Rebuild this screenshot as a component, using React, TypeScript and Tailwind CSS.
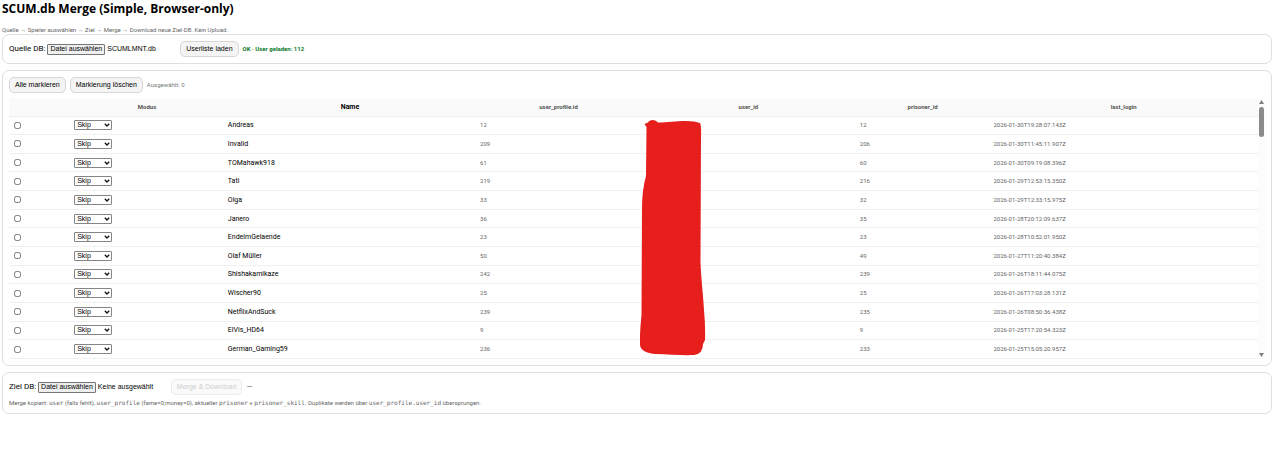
import { useRef, useState } from 'react'

type Mode = 'skip' | 'merge' | 'replace'

interface User {
  name: string
  profileId: number
  prisonerId: number
  lastLogin: string
}

const USERS: User[] = [
  { name: 'Andreas', profileId: 12, prisonerId: 12, lastLogin: '2026-01-30T19:28:07.143Z' },
  { name: 'Invalid', profileId: 209, prisonerId: 206, lastLogin: '2026-01-30T11:45:11.907Z' },
  { name: 'TOMahawk918', profileId: 61, prisonerId: 60, lastLogin: '2026-01-30T09:19:08.396Z' },
  { name: 'Tati', profileId: 219, prisonerId: 216, lastLogin: '2026-01-29T12:53:15.350Z' },
  { name: 'Olga', profileId: 33, prisonerId: 32, lastLogin: '2026-01-29T12:33:15.975Z' },
  { name: 'Janero', profileId: 36, prisonerId: 35, lastLogin: '2026-01-28T20:12:09.637Z' },
  { name: 'EndeimGelaende', profileId: 23, prisonerId: 23, lastLogin: '2026-01-28T10:52:01.950Z' },
  { name: 'Olaf Müller', profileId: 50, prisonerId: 49, lastLogin: '2026-01-27T11:20:40.384Z' },
  { name: 'Shishakamikaze', profileId: 242, prisonerId: 239, lastLogin: '2026-01-26T18:11:44.075Z' },
  { name: 'Wischer90', profileId: 25, prisonerId: 25, lastLogin: '2026-01-26T17:03:28.131Z' },
  { name: 'NetflixAndSuck', profileId: 239, prisonerId: 235, lastLogin: '2026-01-26T08:50:36.438Z' },
  { name: 'ElVis_HD64', profileId: 9, prisonerId: 9, lastLogin: '2026-01-25T17:20:54.323Z' },
  { name: 'German_Gaming59', profileId: 236, prisonerId: 233, lastLogin: '2026-01-25T15:05:20.957Z' },
]

const CARD = 'rounded-[7px] border border-[#dfdfdf] p-1.5'
const BUTTON =
  'h-4 rounded-[5px] border border-[#d6d6d6] bg-[#f4f4f4] px-[5px] font-["Liberation_Sans",Arial,sans-serif] text-[7px] leading-[8px] text-black disabled:border-[#ebebeb] disabled:bg-[#fafafa] disabled:text-[#cfcfcf]'
const CODE = 'font-["DejaVu_Sans_Mono",monospace] text-[6px]'

function FilePicker({ id, label, initial }: { id: string; label: string; initial: string }) {
  const ref = useRef<HTMLInputElement>(null)
  const [fileName, setFileName] = useState(initial)

  return (
    <div className="flex items-center">
      <label htmlFor={id} className="mr-0.5 text-[8px] leading-[10px]">
        {label}
      </label>
      <input
        ref={ref}
        id={id}
        type="file"
        accept=".db"
        className="hidden"
        onChange={(e) => setFileName(e.target.files?.[0]?.name ?? initial)}
      />
      <button
        type="button"
        onClick={() => ref.current?.click()}
        className='h-[11px] rounded-[1px] border border-[#767676] bg-[#efefef] px-0.5 font-["Liberation_Sans",Arial,sans-serif] text-[7px] leading-[8px]'
      >
        Datei auswählen
      </button>
      <span className='ml-0.5 w-[73px] font-["Liberation_Sans",Arial,sans-serif] text-[7px] leading-[8px]'>
        {fileName}
      </span>
    </div>
  )
}

function ModeSelect({ name }: { name: string }) {
  const [mode, setMode] = useState<Mode>('skip')

  return (
    <div className="grid w-[38px] items-center">
      <select
        aria-label={`Modus ${name}`}
        value={mode}
        onChange={(e) => setMode(e.target.value as Mode)}
        className='col-start-1 row-start-1 h-2.5 w-full appearance-none rounded-[1px] border border-[#858585] bg-white pl-0.5 font-["Liberation_Sans",Arial,sans-serif] text-[7px] leading-[8px]'
      >
        <option value="skip">Skip</option>
        <option value="merge">Merge</option>
        <option value="replace">Replace</option>
      </select>
      <svg
        viewBox="0 0 6 4"
        className="pointer-events-none col-start-1 row-start-1 mr-0.5 h-1 w-1.5 justify-self-end"
        fill="none"
        stroke="#111"
        strokeWidth="1.3"
      >
        <path d="M0.8 0.8 3 3 5.2 0.8" />
      </svg>
    </div>
  )
}

function Redaction() {
  return (
    <svg
      viewBox="640 119 66 238"
      className="pointer-events-none absolute top-[21px] left-[50.5%] h-[238px] w-[66px]"
      fill="#e61e1c"
    >
      <path d="M644.5 124 L648 122.5 Q649 120 653 120 Q656 120 658 122.5 C668 122.5 675 121 686 121 Q695 121 700 123 Q701.5 126 701 136 L700.5 262 C701 278 703 292 704 310 Q705.5 326 705 340 L703 344 Q703 354 694 355 C684 355.5 668 354.5 656 354 Q641 353 640 345 Q639.5 334 641.5 315 L642 208 Q642 190 646 176 L646.5 127 Z" />
    </svg>
  )
}

export default function App() {
  const [selected, setSelected] = useState<string[]>([])

  const toggle = (name: string) => {
    setSelected((s) => (s.includes(name) ? s.filter((n) => n !== name) : [...s, name]))
  }

  return (
    <main className='bg-white pt-0.5 pr-[7px] pl-0.5 font-["Roboto","Noto_Sans",sans-serif] text-black'>
      <h1 className='font-["Open_Sans","Noto_Sans",sans-serif] text-[12px] leading-[14px] font-bold'>
        SCUM.db Merge (Simple, Browser-only)
      </h1>
      <p className="mt-2.5 text-[6px] leading-[8px] text-[#666]">
        Quelle → Spieler auswählen → Ziel → Merge → Download neue Ziel-DB. Kein Upload.
      </p>

      <div className="flex flex-col gap-1.5">
        <section className={`${CARD} flex items-center`}>
          <FilePicker id="source-db" label="Quelle DB:" initial="SCUMLMNT.db" />
          <button type="button" className={BUTTON}>
            Userliste laden
          </button>
          <span className="ml-1 text-[6px] leading-[8px] font-bold text-[#0a7a2a]">OK · User geladen: 112</span>
        </section>

        <section className={CARD}>
          <div className="mb-[5px] flex items-center gap-1">
            <button type="button" className={BUTTON} onClick={() => setSelected(USERS.map((u) => u.name))}>
              Alle markieren
            </button>
            <button type="button" className={BUTTON} onClick={() => setSelected([])}>
              Markierung löschen
            </button>
            <span className="text-[6px] leading-[8px] text-[#777]">Ausgewählt: {selected.length}</span>
          </div>

          <div className="flex">
            <div className="relative flex-1">
              <table className="h-[261px] w-full table-fixed border-collapse text-[7px] leading-[10px]">
                <colgroup>
                  <col className="w-[4.9%]" />
                  <col className="w-[12.3%]" />
                  <col className="w-[20.2%]" />
                  <col className="w-[13.2%]" />
                  <col className="w-[17.2%]" />
                  <col className="w-[10.7%]" />
                  <col className="w-[21.5%]" />
                </colgroup>
                <thead>
                  <tr className="h-[18px] border-b border-[#eee] bg-[#fafafa] text-[6px] text-[#555]">
                    <th />
                    <th>Modus</th>
                    <th className="text-[7px] text-black">Name</th>
                    <th>user_profile.id</th>
                    <th>user_id</th>
                    <th>prisoner_id</th>
                    <th>last_login</th>
                  </tr>
                </thead>
                <tbody>
                  {USERS.map((u) => (
                    <tr key={u.name} className="border-b border-[#f0f0f0]">
                      <td className="px-1">
                        <input
                          type="checkbox"
                          aria-label={`${u.name} auswählen`}
                          checked={selected.includes(u.name)}
                          onChange={() => toggle(u.name)}
                          className="ml-px block size-[7px]"
                        />
                      </td>
                      <td className="px-1">
                        <ModeSelect name={u.name} />
                      </td>
                      <td className="px-1">{u.name}</td>
                      <td className="px-1 text-[6px] text-[#666]">{u.profileId}</td>
                      <td />
                      <td className="px-1 text-[6px] text-[#666]">{u.prisonerId}</td>
                      <td className="px-1 text-[6px] text-[#666]">{u.lastLogin}</td>
                    </tr>
                  ))}
                </tbody>
              </table>
              <Redaction />
            </div>

            <div className="flex w-[7px] flex-col items-center bg-[#fcfcfc] py-0.5">
              <svg viewBox="0 0 5 4" className="h-1 w-[5px]" fill="#7f7f7f">
                <path d="M2.5 0 5 4H0Z" />
              </svg>
              <div className="mt-[3px] h-[30px] w-[5px] rounded-full bg-[#8b8b8b]" />
              <svg viewBox="0 0 5 4" className="mt-auto h-1 w-[5px]" fill="#7f7f7f">
                <path d="M2.5 4 5 0H0Z" />
              </svg>
            </div>
          </div>
        </section>

        <section className={CARD}>
          <div className="flex items-center">
            <FilePicker id="target-db" label="Ziel DB:" initial="Keine ausgewählt" />
            <button type="button" disabled className={BUTTON}>
              Merge &amp; Download
            </button>
            <span className="ml-1 text-[8px] leading-[8px] text-[#666]">—</span>
          </div>
          <p className="mt-1 text-[6px] leading-[8px] text-[#666]">
            Merge kopiert: <code className={CODE}>user</code> (falls fehlt), <code className={CODE}>user_profile</code>{' '}
            (fame=0;money=0), aktueller <code className={CODE}>prisoner</code> +{' '}
            <code className={CODE}>prisoner_skill</code>. Duplikate werden über{' '}
            <code className={CODE}>user_profile.user_id</code> übersprungen.
          </p>
        </section>
      </div>
    </main>
  )
}
